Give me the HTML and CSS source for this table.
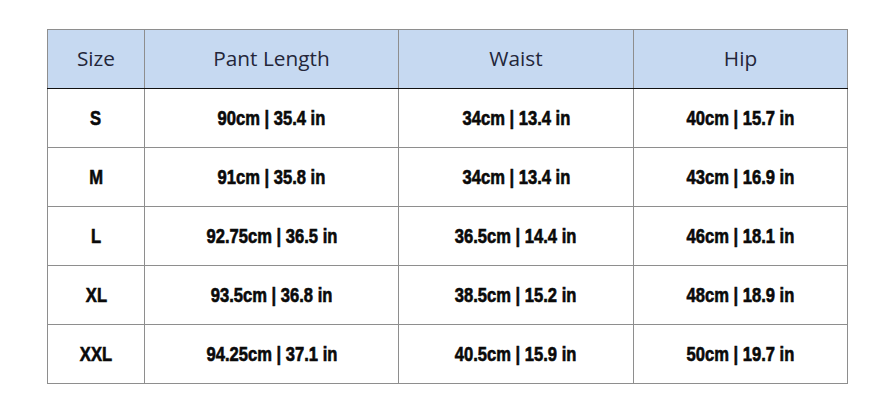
FILE: index.html
```html
<!DOCTYPE html>
<html>
<head>
<meta charset="utf-8">
<link rel="stylesheet" href="styles.css">
</head>
<body>
<table class="size-table">
  <colgroup>
    <col class="c1"><col class="c2"><col class="c3"><col class="c4">
  </colgroup>
  <thead>
    <tr><th>Size</th><th>Pant Length</th><th>Waist</th><th>Hip</th></tr>
  </thead>
  <tbody>
    <tr><td><span class="v">S</span></td><td><span class="v">90cm | 35.4 in</span></td><td><span class="v">34cm | 13.4 in</span></td><td><span class="v">40cm | 15.7 in</span></td></tr>
    <tr><td><span class="v">M</span></td><td><span class="v">91cm | 35.8 in</span></td><td><span class="v">34cm | 13.4 in</span></td><td><span class="v">43cm | 16.9 in</span></td></tr>
    <tr><td><span class="v">L</span></td><td><span class="v">92.75cm | 36.5 in</span></td><td><span class="v">36.5cm | 14.4 in</span></td><td><span class="v">46cm | 18.1 in</span></td></tr>
    <tr><td><span class="v">XL</span></td><td><span class="v">93.5cm | 36.8 in</span></td><td><span class="v">38.5cm | 15.2 in</span></td><td><span class="v">48cm | 18.9 in</span></td></tr>
    <tr><td><span class="v">XXL</span></td><td><span class="v">94.25cm | 37.1 in</span></td><td><span class="v">40.5cm | 15.9 in</span></td><td><span class="v">50cm | 19.7 in</span></td></tr>
  </tbody>
</table>
</body>
</html>
```
FILE: styles.css
```css
html, body {
  margin: 0;
  background: #ffffff;
}
body {
  padding: 29px 0 0 47px;
}
.size-table {
  border-collapse: collapse;
  table-layout: fixed;
  width: 801px;
}
.c1 { width: 97px; }
.c2 { width: 254px; }
.c3 { width: 235px; }
.c4 { width: 214px; }
.size-table th,
.size-table td {
  border: 1px solid #8e8e8e;
  text-align: center;
  vertical-align: middle;
  padding: 0;
}
.size-table th {
  height: 56px;
  padding-bottom: 2px;
  background: #c6d9f1;
  font-family: "Open Sans", "DejaVu Sans", sans-serif;
  font-weight: 400;
  font-size: 20.8px;
  color: #23263a;
  border-bottom: 1px solid #111111;
}
.size-table td {
  height: 58px;
  font-family: "Liberation Sans", Arial, sans-serif;
  font-weight: 700;
  font-size: 19.5px;
  color: #0a0a0a;
}
.v {
  display: inline-block;
  transform: scale(0.85, 1.05);
  white-space: nowrap;
  -webkit-text-stroke: 0.6px #0a0a0a;
}
```
